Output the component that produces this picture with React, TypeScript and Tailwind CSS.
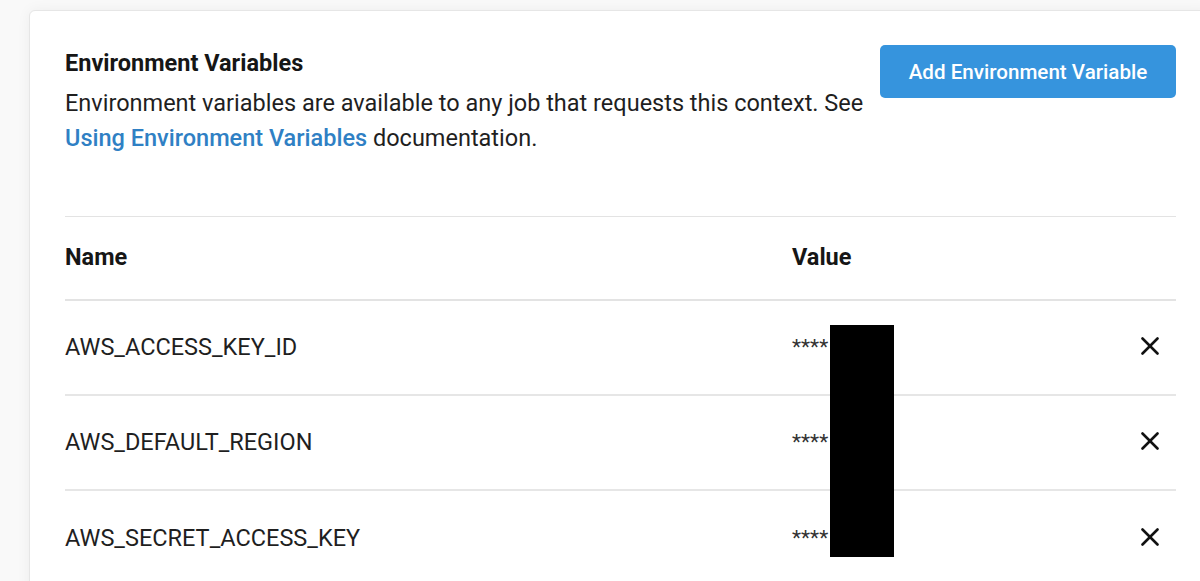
import { Fragment } from 'react';

const variables = [
  { name: 'AWS_ACCESS_KEY_ID', value: '****' },
  { name: 'AWS_DEFAULT_REGION', value: '****' },
  { name: 'AWS_SECRET_ACCESS_KEY', value: '****' },
];

function CloseIcon() {
  return (
    <svg width="18" height="18" viewBox="0 0 18 18" fill="none" stroke="#111" strokeWidth="2.6" strokeLinecap="round">
      <path d="M1.5 1.5 L16.5 16.5" />
      <path d="M16.5 1.5 L1.5 16.5" />
    </svg>
  );
}

export default function App() {
  return (
    <div
      className="h-[581px] overflow-hidden bg-[#f9f9f9] pl-[29px] pt-[10px]"
      style={{ fontFamily: 'Roboto, "Liberation Sans", sans-serif' }}
    >
      {/* Context card */}
      <div className="w-[1183px] h-[620px] bg-white rounded-[6px] border border-[#e6e6e6] shadow-[0_0_14px_rgba(0,0,0,0.05)] pl-[35px] pr-[35px] pt-[34px]">
        {/* Header */}
        <div className="flex items-start">
          <div className="flex-1 pt-[3px]">
            <h2 className="text-[23.5px] leading-[30px] font-bold text-[#161616]">Environment Variables</h2>
            <p className="mt-[8px] text-[23.5px] leading-[35px] text-[#1f1f1f] pr-[10px]">
              Environment variables are available to any job that requests this context. See{' '}
              <a href="#" className="font-medium text-[#2f80c4]">Using Environment Variables</a> documentation.
            </p>
          </div>
          <button className="w-[296px] h-[53px] shrink-0 rounded-[5px] bg-[#3694dd] text-white text-[20.6px] font-medium pt-[1px]">
            Add Environment Variable
          </button>
        </div>

        {/* Variables table */}
        <div className="relative mt-[60px] border-t border-[#e3e3e3]">
          <div className="grid grid-cols-[727px_1fr_auto]">
            <div className="h-[84px] flex items-center text-[23.5px] font-bold text-[#161616] border-b-2 border-[#e3e3e3]">Name</div>
            <div className="h-[84px] flex items-center text-[23.5px] font-bold text-[#161616] border-b-2 border-[#e3e3e3]">Value</div>
            <div className="h-[84px] border-b-2 border-[#e3e3e3]" />
            {variables.map((v, i) => (
              <Fragment key={v.name}>
                <div className={`h-[95px] flex items-center text-[23.5px] text-[#1f1f1f] ${i < variables.length - 1 ? 'border-b-2 border-[#e6e6e6]' : ''}`}>
                  {v.name}
                </div>
                <div className={`h-[95px] flex items-center text-[21px] text-[#333] ${i < variables.length - 1 ? 'border-b-2 border-[#e6e6e6]' : ''}`}>
                  {v.value}
                </div>
                <div className={`h-[95px] flex items-center pr-[17px] pb-[4px] ${i < variables.length - 1 ? 'border-b-2 border-[#e6e6e6]' : ''}`}>
                  <button className="flex items-center justify-center">
                    <CloseIcon />
                  </button>
                </div>
              </Fragment>
            ))}
          </div>
          {/* Redacted values */}
          <div className="absolute left-[765px] top-[108px] w-[64px] h-[232px] bg-black" />
        </div>
      </div>
    </div>
  );
}
